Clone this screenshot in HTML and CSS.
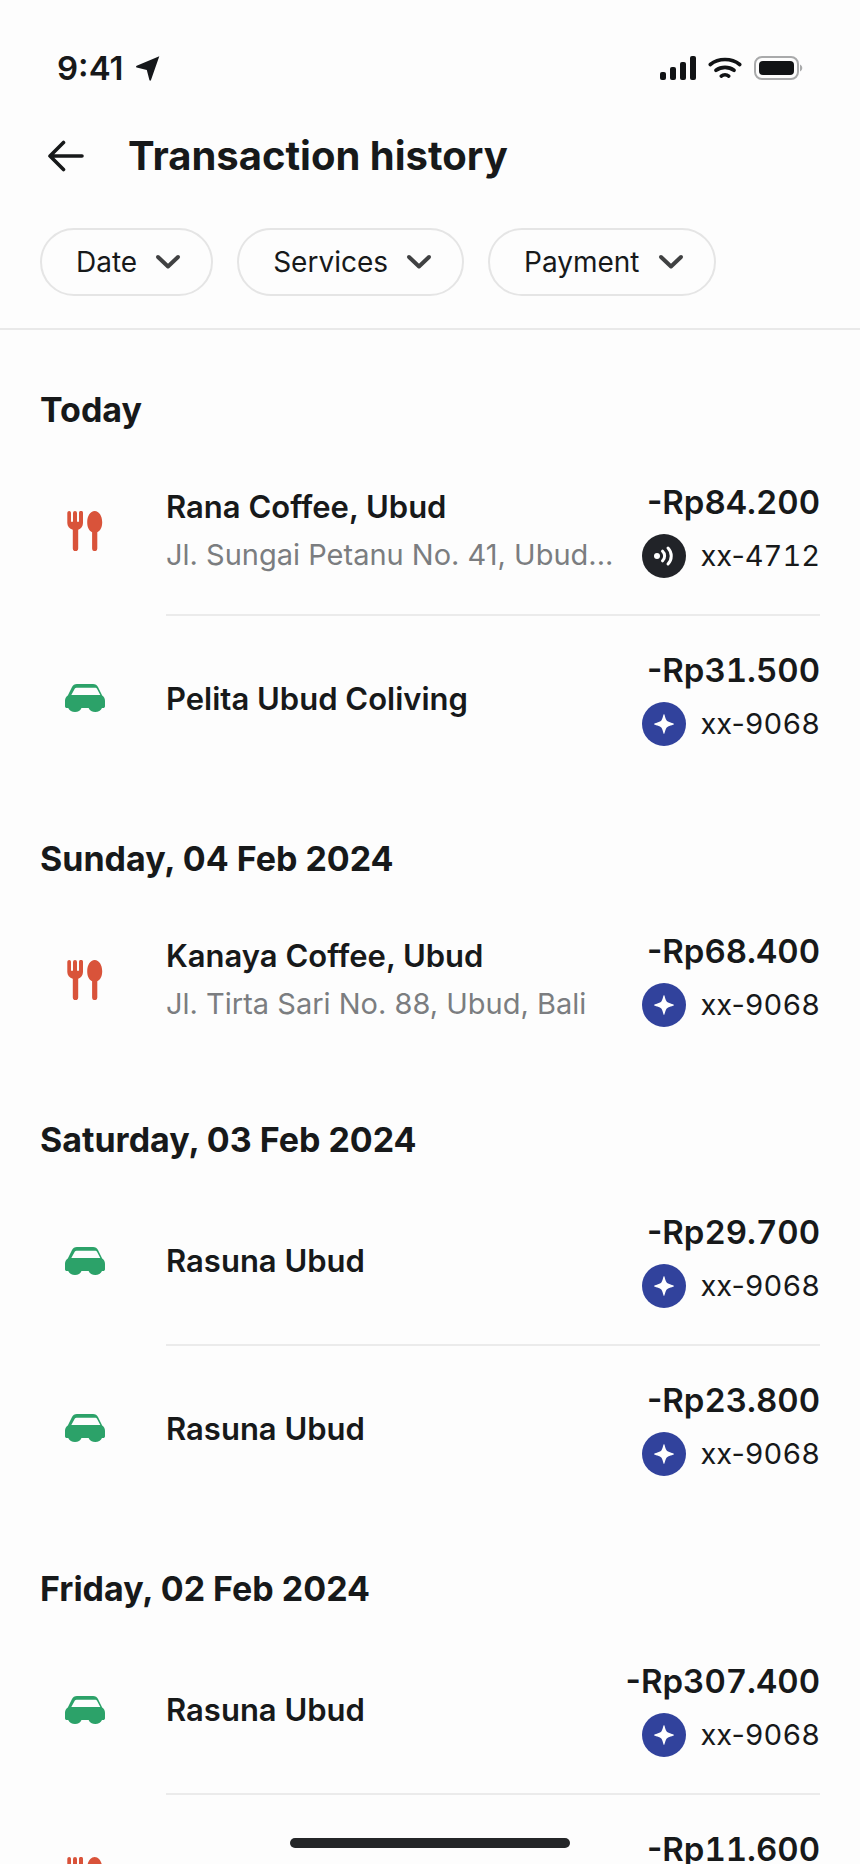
FILE: index.html
```html
<!DOCTYPE html>
<html lang="en">
<head>
<meta charset="utf-8">
<meta name="viewport" content="width=device-width, initial-scale=1">
<title>Transaction history</title>
<link rel="stylesheet" href="styles.css">
</head>
<body>
<svg class="sprite" aria-hidden="true">
  <symbol id="food" viewBox="0 0 36 40">
    <path d="M2.200 0A1.800 1.800 0 0 1 4 1.800V10a1 1 0 0 0 2 0V2a2 2 0 0 1 4 0v8a1 1 0 0 0 2 0V1.800a2 2 0 0 1 4 0V12c0 3.400-2 5.600-4.800 6.800V37.500a2.700 2.700 0 0 1-5.400 0V18.800C2.400 17.600.3 15.400.3 12V1.800A1.900 1.900 0 0 1 2.200 0Z"/>
    <path d="M27.700 0c4.400 0 7.500 5 7.500 11.200 0 4.800-1.800 8.600-4.900 10v16.300a2.600 2.600 0 0 1-5.200 0V21.200c-3.100-1.400-4.900-5.200-4.900-10C20.200 5 23.300 0 27.700 0Z"/>
  </symbol>
  <symbol id="car" viewBox="0 0 40 28">
    <path fill-rule="evenodd" d="M12 0H28C30.500 0 32 1 33 3l4.200 8.400C39 12.600 40 14.400 40 17v5.200c0 1.100-.8 1.800-1.800 1.800H37c-1.200 2.500-3.700 4-6.700 4s-5.700-1.500-6.700-4H16.500c-1 2.500-3.500 4-6.500 4S4.400 26.500 3.200 24H1.800C.8 24 0 23.300 0 22.200V17c0-2.600 1-4.400 2.800-5.600L7 3C8 1 9.500 0 12 0ZM6.300 11H35.300L32 4.800C31.500 4 31 3.800 30.200 3.800H11.500c-.8 0-1.400.3-1.800 1Z"/>
  </symbol>
  <symbol id="tap" viewBox="0 0 44 44">
    <circle cx="22" cy="22" r="22" fill="#212328"/>
    <circle cx="15" cy="22" r="3" fill="#fff"/>
    <path d="M20.500 17.200a6.500 6.500 0 0 1 0 9.600M26 14a11.500 11.500 0 0 1 0 16" fill="none" stroke="#fff" stroke-width="3" stroke-linecap="round"/>
  </symbol>
  <symbol id="spark" viewBox="0 0 44 44">
    <circle cx="22" cy="22" r="22" fill="#31429c"/>
    <path d="M22 12c.7 0 1 3.800 2.500 6.200C25.500 20 32 21 32 22s-6.500 2-7.500 3.800C23 28.200 22.700 32 22 32s-1-3.800-2.500-6.200C18.500 24 12 23 12 22s6.500-2 7.500-3.800C21 15.800 21.300 12 22 12Z" fill="#fff"/>
  </symbol>
  <symbol id="chevron" viewBox="0 0 26 16">
    <path d="M3 3l10 9.500L23 3" fill="none" stroke="currentColor" stroke-width="4" stroke-linecap="round" stroke-linejoin="round"/>
  </symbol>
</svg>
<div class="app">
  <header class="header">
    <div class="status">
      <div class="status-group status-time">
        <span>9:41</span>
        <svg width="24" height="25" viewBox="0 0 24 25" aria-hidden="true"><path d="M23.300.3 15 24.100c-.3.900-1.300.9-1.600 0L10.800 14 .7 11.400c-.9-.3-.9-1.200 0-1.600Z" fill="#15171a"/></svg>
      </div>
      <div class="status-group">
        <svg width="36" height="24" viewBox="0 0 36 24" aria-hidden="true" fill="#111315"><rect y="16" width="6" height="8" rx="2"/><rect x="10" y="11" width="6" height="13" rx="2"/><rect x="20" y="6" width="6" height="18" rx="2"/><rect x="30" width="6" height="24" rx="2"/></svg>
        <svg width="34" height="22" viewBox="0 0 34 22" aria-hidden="true" fill="none" stroke="#111315" stroke-width="3.600" stroke-linecap="round"><path d="M2.300 7.500C10.500.8 23.500.8 31.700 7.500M8 13.300c5.200-3.900 12.800-3.900 18 0M13.300 19.100c2-1.700 5.400-1.700 7.400 0"/></svg>
        <svg width="49" height="24" viewBox="0 0 49 24" aria-hidden="true"><rect x="1" y="1" width="43" height="22" rx="7" fill="none" stroke="#a9aaab" stroke-width="2"/><rect x="5" y="5" width="35" height="14" rx="4" fill="#111315"/><path d="M46 8.500c3 1.500 3 5.500 0 7Z" fill="#a9aaab"/></svg>
      </div>
    </div>
    <div class="titlebar">
      <button class="back" type="button" aria-label="Back"><svg width="36" height="32" viewBox="0 0 36 32" aria-hidden="true"><path d="M34 16H2M15.500 2.500 2 16l13.500 13.500" fill="none" stroke="currentColor" stroke-width="3.600" stroke-linecap="round" stroke-linejoin="round"/></svg></button>
      <h1 class="title">Transaction history</h1>
    </div>
    <div class="filters">
      <button class="chip" type="button" aria-haspopup="listbox">Date<svg class="chevron"><use href="#chevron"/></svg></button>
      <button class="chip" type="button" aria-haspopup="listbox">Services<svg class="chevron"><use href="#chevron"/></svg></button>
      <button class="chip" type="button" aria-haspopup="listbox">Payment<svg class="chevron"><use href="#chevron"/></svg></button>
    </div>
  </header>
  <main class="history">
    <section class="day">
      <h2 class="date">Today</h2>
      <ul class="list">
        <li class="row">
          <svg class="category food"><use href="#food"/></svg>
          <div class="body">
            <div class="merchant"><p class="name">Rana Coffee, Ubud</p><p class="address">Jl. Sungai Petanu No. 41, Ubud...</p></div>
            <div class="payment"><p class="amount">-Rp<span class="digits">84.200</span></p><p class="card"><svg class="badge"><use href="#tap"/></svg><span>xx-<span class="digits">4712</span></span></p></div>
          </div>
        </li>
        <li class="row">
          <svg class="category car"><use href="#car"/></svg>
          <div class="body">
            <div class="merchant"><p class="name">Pelita Ubud Coliving</p></div>
            <div class="payment"><p class="amount">-Rp<span class="digits">31.500</span></p><p class="card"><svg class="badge"><use href="#spark"/></svg><span>xx-<span class="digits">9068</span></span></p></div>
          </div>
        </li>
      </ul>
    </section>
    <section class="day">
      <h2 class="date">Sunday, 04 Feb 2024</h2>
      <ul class="list">
        <li class="row">
          <svg class="category food"><use href="#food"/></svg>
          <div class="body">
            <div class="merchant"><p class="name">Kanaya Coffee, Ubud</p><p class="address">Jl. Tirta Sari No. 88, Ubud, Bali</p></div>
            <div class="payment"><p class="amount">-Rp<span class="digits">68.400</span></p><p class="card"><svg class="badge"><use href="#spark"/></svg><span>xx-<span class="digits">9068</span></span></p></div>
          </div>
        </li>
      </ul>
    </section>
    <section class="day">
      <h2 class="date">Saturday, 03 Feb 2024</h2>
      <ul class="list">
        <li class="row">
          <svg class="category car"><use href="#car"/></svg>
          <div class="body">
            <div class="merchant"><p class="name">Rasuna Ubud</p></div>
            <div class="payment"><p class="amount">-Rp<span class="digits">29.700</span></p><p class="card"><svg class="badge"><use href="#spark"/></svg><span>xx-<span class="digits">9068</span></span></p></div>
          </div>
        </li>
        <li class="row">
          <svg class="category car"><use href="#car"/></svg>
          <div class="body">
            <div class="merchant"><p class="name">Rasuna Ubud</p></div>
            <div class="payment"><p class="amount">-Rp<span class="digits">23.800</span></p><p class="card"><svg class="badge"><use href="#spark"/></svg><span>xx-<span class="digits">9068</span></span></p></div>
          </div>
        </li>
      </ul>
    </section>
    <section class="day">
      <h2 class="date">Friday, 02 Feb 2024</h2>
      <ul class="list">
        <li class="row">
          <svg class="category car"><use href="#car"/></svg>
          <div class="body">
            <div class="merchant"><p class="name">Rasuna Ubud</p></div>
            <div class="payment"><p class="amount">-Rp<span class="digits">307.400</span></p><p class="card"><svg class="badge"><use href="#spark"/></svg><span>xx-<span class="digits">9068</span></span></p></div>
          </div>
        </li>
        <li class="row">
          <svg class="category food"><use href="#food"/></svg>
          <div class="body">
            <div class="merchant"></div>
            <div class="payment"><p class="amount">-Rp<span class="digits">11.600</span></p></div>
          </div>
        </li>
      </ul>
    </section>
  </main>
  <div class="home-indicator"></div>
</div>
</body>
</html>
```

FILE: styles.css
```css
* { box-sizing: border-box; }
body {
  margin: 0;
  background: #fdfdfd;
  color: #17191a;
  font-family: Inter, "Liberation Sans", sans-serif;
}
h1, h2, p, ul { margin: 0; padding: 0; }
ul { list-style: none; }
button { font: inherit; color: inherit; background: none; cursor: pointer; }
svg { display: block; flex: none; }
.sprite { position: absolute; width: 0; height: 0; }

.app {
  height: 100vh;
  display: flex;
  flex-direction: column;
  overflow: hidden;
}
.header {
  flex: none;
  padding-top: 48px;
  border-bottom: 2px solid #e9e9e9;
}
.status {
  display: flex;
  justify-content: space-between;
  align-items: center;
  height: 40px;
  padding: 0 57px;
}
.status-group { display: flex; align-items: center; gap: 12px; }
.status-time { font-size: 33px; font-weight: 600; }
.titlebar {
  display: flex;
  align-items: center;
  gap: 44px;
  height: 56px;
  margin-top: 40px;
  padding: 0 48px;
}
.back { display: flex; padding: 0; border: 0; }
.title { font-size: 40px; line-height: 56px; font-weight: 700; }
.filters { display: flex; gap: 24px; padding: 44px 40px 32px; }
.chip {
  display: flex;
  align-items: center;
  gap: 18px;
  height: 68px;
  padding: 0 30px 0 34px;
  border: 2px solid #e5e5e5;
  border-radius: 34px;
  font-size: 28px;
  line-height: 40px;
}
.chevron { width: 26px; height: 16px; color: #404142; }

.history { flex: 1; min-height: 0; overflow: hidden; padding-top: 56px; }
.day { padding: 0 40px 53px; }
.date { font-size: 34px; line-height: 48px; font-weight: 700; margin-bottom: 14px; }
.row { display: flex; align-items: center; gap: 36px; }
.category { width: 90px; }
.food { height: 40px; color: #d9533a; fill: currentColor; }
.car { height: 28px; color: #2ca269; fill: currentColor; }
.body {
  flex: 1;
  min-width: 0;
  min-height: 166px;
  display: flex;
  align-items: center;
  justify-content: space-between;
  gap: 24px;
}
.row + .row .body { border-top: 2px solid #ebebeb; min-height: 168px; }
.merchant { min-width: 0; white-space: nowrap; }
.name { font-size: 31px; line-height: 48px; font-weight: 600; }
.address { font-size: 29px; line-height: 48px; color: #7b7d80; }
.payment {
  flex: none;
  align-self: stretch;
  display: flex;
  flex-direction: column;
  align-items: flex-end;
  gap: 12px;
  padding: 34px 0 36px;
  white-space: nowrap;
}
.digits { font-variant-numeric: tabular-nums; }
.amount { font-size: 33px; line-height: 40px; font-weight: 600; }
.card { display: flex; align-items: center; gap: 14px; font-size: 29px; line-height: 44px; }
.badge { width: 44px; height: 44px; }
.home-indicator {
  position: fixed;
  bottom: 16px;
  left: 50%;
  width: 280px;
  height: 10px;
  margin-left: -140px;
  border-radius: 5px;
  background: #242628;
}
```
